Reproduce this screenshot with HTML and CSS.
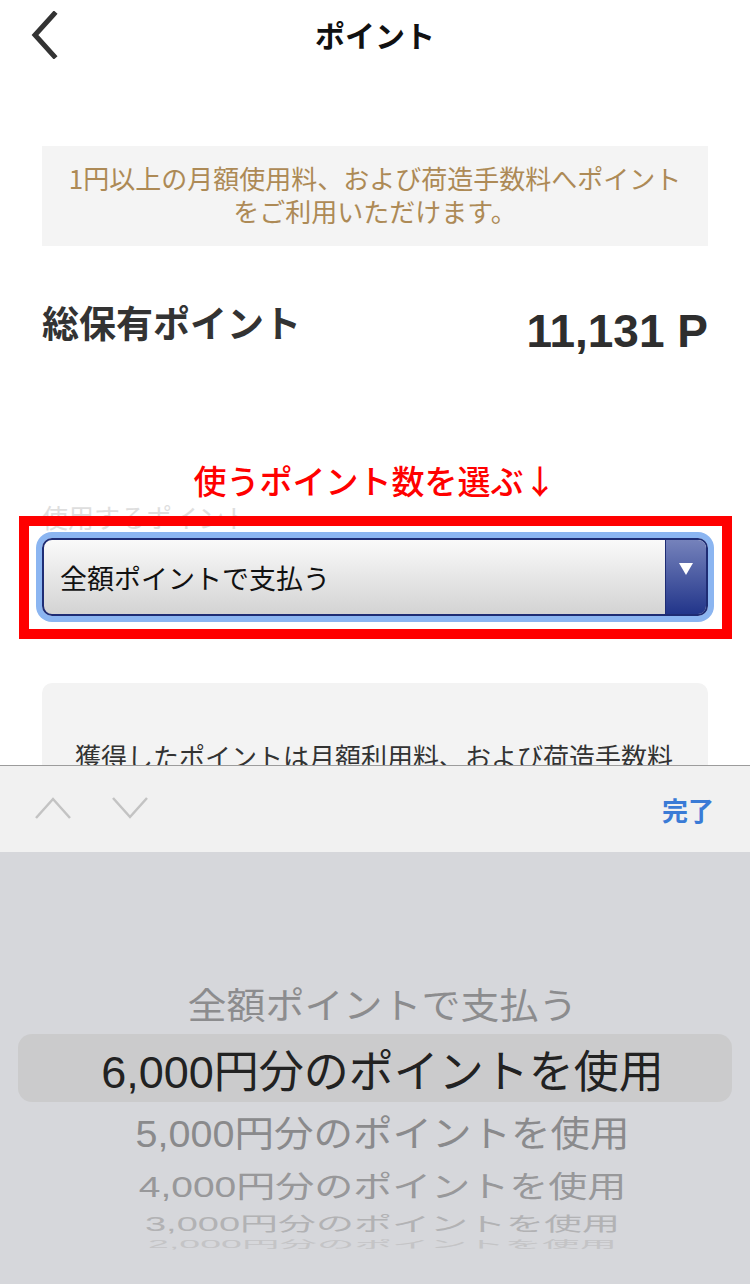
FILE: index.html
```html
<!DOCTYPE html>
<html lang="ja">

<head>
  <meta charset="UTF-8">
  <meta name="viewport" content="width=device-width, initial-scale=1.0">
  <title>ポイント</title>
  <link rel="stylesheet" href="styles.css">
</head>

<body>
  <div class="header">
    <div class="back">
      <svg width="34" height="48" viewBox="0 0 34 48">
        <polyline points="26,3 7,24 26,45" fill="none" stroke="#333" stroke-width="5" stroke-linecap="square" />
      </svg>
    </div>
    <div class="title">ポイント</div>
    <div></div>
  </div>

  <div class="main">
    <div class="notice">
      <div>1円以上の月額使用料、および荷造手数料へポイント</div>
      <div>をご利用いただけます。</div>
    </div>

    <div class="total">
      <div class="total-label">総保有ポイント</div>
      <div class="total-value">11,131 P</div>
    </div>

    <div class="hint">使うポイント数を選ぶ↓</div>
    <div class="field-label">使用するポイント</div>
    <div class="select">
      <div class="select-text">全額ポイントで支払う</div>
      <div class="select-btn"><span class="tri"></span></div>
      <div class="mark"></div>
    </div>

    <div class="card">
      <p>獲得したポイントは月額利用料、および荷造手数料</p>
    </div>
  </div>

  <div class="keyboard">
    <div class="toolbar">
      <div class="arrows">
        <svg width="38" height="24" viewBox="0 0 38 24">
          <polyline points="2,22 19,3 36,22" fill="none" stroke="#c3c3c3" stroke-width="2.5" />
        </svg>
        <svg width="38" height="24" viewBox="0 0 38 24">
          <polyline points="2,2 19,21 36,2" fill="none" stroke="#c3c3c3" stroke-width="2.5" />
        </svg>
      </div>
      <div class="done">完了</div>
    </div>
    <div class="picker">
      <div class="opt opt-a">全額ポイントで支払う</div>
      <div class="opt opt-sel">6,000円分のポイントを使用</div>
      <div class="opt opt-b">5,000円分のポイントを使用</div>
      <div class="opt opt-c">4,000円分のポイントを使用</div>
      <div class="opt opt-d">3,000円分のポイントを使用</div>
      <div class="opt opt-e">2,000円分のポイントを使用</div>
    </div>
  </div>
</body>

</html>
```

FILE: styles.css
```css
body {
  margin: 0;
  height: 100vh;
  overflow: hidden;
  background: #fff;
  font-family: "Noto Sans CJK JP", sans-serif;
  color: #333;
}

.header {
  height: 68px;
  display: grid;
  grid-template-columns: 1fr auto 1fr;
  align-items: center;
}

.back {
  padding-left: 28px;
  padding-top: 2px;
  display: flex;
}

.title {
  font-size: 30px;
  font-weight: 700;
  color: #111;
}

.main {
  padding: 0 42px;
}

.notice {
  margin-top: 78px;
  height: 100px;
  box-sizing: border-box;
  padding: 19px 20px 0;
  background: #f4f4f4;
  color: #ad8a56;
  font-size: 26px;
  line-height: 1;
  text-align: center;
  display: flex;
  flex-direction: column;
  gap: 7px;
}

.total {
  margin-top: 54px;
  display: flex;
  justify-content: space-between;
  align-items: flex-start;
}

.total-label {
  font-size: 37px;
  line-height: 44px;
  font-weight: 700;
  color: #333;
}

.total-value {
  margin-top: 9px;
  font-family: "Liberation Sans", sans-serif;
  font-size: 46px;
  line-height: 44px;
  font-weight: 700;
  color: #2e2e2e;
}

.hint {
  margin-top: 107px;
  text-align: center;
  color: #f00;
  font-size: 33px;
  line-height: 40px;
  font-weight: 500;
}

.field-label {
  margin-top: 2px;
  font-size: 26px;
  line-height: 30px;
  color: #dedede;
}

.select {
  position: relative;
  margin-top: 6px;
  height: 78px;
  box-sizing: border-box;
  display: flex;
  border: 2px solid #1e2c74;
  border-radius: 10px;
  background: linear-gradient(#fafafa, #d3d3d3);
  box-shadow: 0 0 0 6px #8bb5f1;
}

.select-text {
  flex: 1;
  display: flex;
  align-items: center;
  padding-left: 16px;
  font-size: 27px;
  color: #111;
}

.select-btn {
  width: 41px;
  border-left: 1px solid #1e2c74;
  border-radius: 0 8px 8px 0;
  background: linear-gradient(#7582bb, #22358a);
  display: flex;
  justify-content: center;
  padding-top: 23px;
  box-sizing: border-box;
}

.tri {
  width: 0;
  height: 0;
  border-left: 7px solid transparent;
  border-right: 7px solid transparent;
  border-top: 12px solid #fff;
}

/* red annotation frame drawn over the field */
.mark {
  position: absolute;
  top: -24px;
  left: -25px;
  right: -26px;
  bottom: -25px;
  border: 10px solid #f00;
}

.card {
  margin-top: 67px;
  height: 320px;
  background: #f3f3f3;
  border-radius: 10px;
  padding: 55px 33px 0;
}

.card p {
  margin: 0;
  font-size: 26px;
  line-height: 36px;
  color: #333;
  white-space: nowrap;
}

.keyboard {
  position: fixed;
  left: 0;
  right: 0;
  bottom: 0;
  height: 519px;
  display: flex;
  flex-direction: column;
}

.toolbar {
  height: 87px;
  box-sizing: border-box;
  border-top: 1px solid #9c9c9c;
  background: #f1f1f1;
  display: flex;
  justify-content: space-between;
  align-items: center;
  padding: 0 36px 0 34px;
}

.arrows {
  display: flex;
  gap: 39px;
  padding-bottom: 2px;
}

.done {
  color: #3a7bd6;
  font-size: 26px;
  font-weight: 700;
}

.picker {
  flex: 1;
  background: #d6d7db;
  padding: 120px 18px 0;
  display: flex;
  flex-direction: column;
  align-items: center;
}

.opt {
  width: 100%;
  box-sizing: border-box;
  padding-left: 15px;
  display: flex;
  justify-content: center;
  align-items: center;
  font-family: "Liberation Sans", "Noto Sans CJK JP", sans-serif;
  white-space: nowrap;
}

.opt-a {
  height: 62px;
  font-size: 39px;
  color: #8c8c8e;
  transform: scaleY(0.92);
}

.opt-sel {
  height: 68px;
  font-size: 45px;
  color: #222;
  background: #cbcbcc;
  border-radius: 14px;
}

.opt-b {
  height: 56px;
  font-size: 39.5px;
  color: #8a8a8c;
  transform: scaleY(0.92);
}

.opt-c {
  height: 52px;
  font-size: 39px;
  color: #98989a;
  transform: scaleY(0.76);
}

.opt-d {
  height: 24px;
  font-size: 38px;
  color: #b2b2b4;
  transform: scaleY(0.52);
}

.opt-e {
  height: 18px;
  font-size: 37.5px;
  color: #c4c4c6;
  transform: scaleY(0.28);
}
```
